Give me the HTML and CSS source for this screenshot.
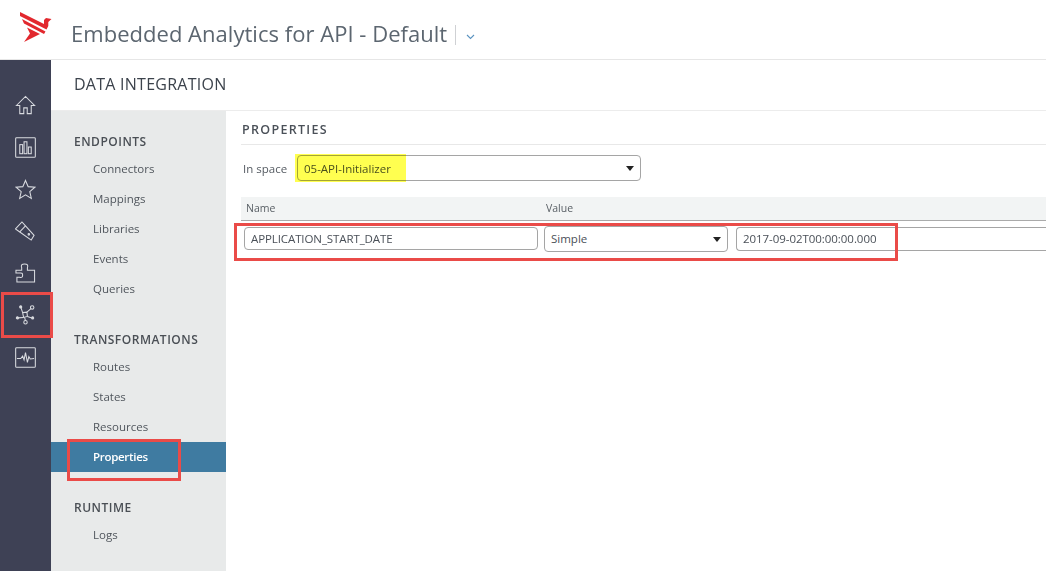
FILE: index.html
```html
<!DOCTYPE html>
<html>
    <head>
        <meta charset="utf-8" />
        <title>Data Integration</title>
        <link rel="stylesheet" href="styles.css">
    </head>
    <body>
        <header class="topbar">
            <svg class="logo" width="32" height="32" viewBox="0 0 32 32">
                <path fill="#e2282e" d="M0 0 L24 12 L24 8 L26 6 L31.500 7 L28.300 10 L28.300 14 L26.500 17.500 L0 4 Z"/>
                <path fill="#e2282e" d="M2 7 L25.500 19.500 L24 22 L4 11.500 Z"/>
                <path fill="#e2282e" d="M7 15.500 L20 22 L4 30 L10 21.500 Z"/>
            </svg>
            <h1 class="app-title">Embedded Analytics for API - Default</h1>
            <span class="title-sep"></span>
            <svg class="title-caret" width="9" height="6" viewBox="0 0 9 6"><path d="M1 1 L4.500 4.500 L8 1" fill="none" stroke="#5b93c0" stroke-width="1.100"/></svg>
        </header>
        <div class="shell">
            <aside class="rail">
                <svg class="rail-icon" viewBox="0 0 22 22"><path d="M1.500 11 L11 1.500 L20.500 11 L17 11 L17 19.500 L12.800 19.500 L12.800 13.500 L9.200 13.500 L9.200 19.500 L5 19.500 L5 11 Z"/></svg>
                <svg class="rail-icon" viewBox="0 0 22 22"><rect x="0.700" y="0.700" width="20.600" height="20.600" rx="1"/><rect x="5" y="8" width="3" height="9.500"/><rect x="9.500" y="5" width="3" height="12.500"/><rect x="14" y="10.500" width="3" height="7"/></svg>
                <svg class="rail-icon" viewBox="0 0 22 22"><path d="M11 1.500 L13.800 8 L20.800 8.600 L15.500 13.300 L17.100 20.300 L11 16.600 L4.900 20.300 L6.500 13.300 L1.200 8.600 L8.200 8 Z"/></svg>
                <svg class="rail-icon" viewBox="0 0 22 22"><path d="M0.500 8.300 L7.300 1 L11 5 L20 15 L17 20 L5 11.500 Z"/><path d="M5 11.500 L11 5"/><circle cx="14.500" cy="14" r="0.800"/></svg>
                <svg class="rail-icon" viewBox="0 0 22 22"><path d="M1 7.500 L7 7.500 L7 5 Q5.500 1 10 1 Q14.500 1 13 5 L13 7.500 L20.500 7.500 L20.500 20 L2 20 L2 15 L5 15 Q8 16 8 12.500 Q8 10 5 10.500 L1 10.500 Z"/></svg>
                <svg class="rail-icon" viewBox="0 0 22 22"><path d="M8 8 L12.500 7.500 L13 12 L9 13 Z"/><path d="M6 2 L8 8 M12.500 7.500 L17 3.500 M9 13 L3 13.500 M13 12 L17.500 13.500 M10 13 L11 16.500"/><circle cx="6" cy="2" r="1.100" class="dot"/><circle cx="18" cy="2.500" r="1.800"/><circle cx="2.500" cy="13.500" r="1.100" class="dot"/><circle cx="18.500" cy="13.500" r="1.100" class="dot"/><circle cx="11" cy="18" r="1.800"/></svg>
                <svg class="rail-icon" viewBox="0 0 22 22"><rect x="0.700" y="0.700" width="20.600" height="20.600" rx="1"/><path d="M2 12 L6 12 L8 9.500 L9.500 13.500 L11 6 L13 16 L14.500 10 L16 12.500 L20 12"/></svg>
            </aside>
            <div class="workspace">
                <div class="section-title">DATA INTEGRATION</div>
                <div class="columns">
                    <nav class="side-nav">
                        <h3 class="nav-group">ENDPOINTS</h3>
                        <a class="nav-item">Connectors</a>
                        <a class="nav-item">Mappings</a>
                        <a class="nav-item">Libraries</a>
                        <a class="nav-item">Events</a>
                        <a class="nav-item">Queries</a>
                        <h3 class="nav-group">TRANSFORMATIONS</h3>
                        <a class="nav-item">Routes</a>
                        <a class="nav-item">States</a>
                        <a class="nav-item">Resources</a>
                        <a class="nav-item active">Properties</a>
                        <h3 class="nav-group">RUNTIME</h3>
                        <a class="nav-item">Logs</a>
                    </nav>
                    <main class="content">
                        <h2 class="content-title">PROPERTIES</h2>
                        <div class="space-row">
                            <span class="space-label">In space</span>
                            <div class="field field-select space-select">
                                <span>05-API-Initializer</span>
                                <i class="arrow"></i>
                                <b class="highlight"></b>
                            </div>
                        </div>
                        <div class="table-head">
                            <span class="col-name">Name</span>
                            <span>Value</span>
                        </div>
                        <div class="table-row">
                            <div class="field name-field">APPLICATION_START_DATE</div>
                            <div class="field field-select type-field"><span>Simple</span><i class="arrow"></i></div>
                            <div class="field value-field">2017-09-02T00:00:00.000</div>
                        </div>
                    </main>
                </div>
            </div>
        </div>
        <div class="mark mark-rail"></div>
        <div class="mark mark-nav"></div>
        <div class="mark mark-row"></div>
    </body>
</html>
```

FILE: styles.css
```css
html, body {
    margin: 0;
    padding: 0;
    height: 571px;
    overflow: hidden;
    background: #fff;
}

body {
    font-family: "Open Sans", sans-serif;
    color: #4a5058;
    position: relative;
}

.topbar {
    height: 59px;
    border-bottom: 1px solid #e6e6e6;
    display: flex;
    align-items: center;
}

.logo {
    margin-left: 20px;
    margin-top: -3px;
    flex: none;
}

.app-title {
    margin: 6px 0 0 19px;
    font-size: 22px;
    font-weight: 400;
    letter-spacing: 0.03px;
    color: #5c6670;
    white-space: nowrap;
}

.title-sep {
    width: 1px;
    height: 20px;
    background: #cfd1d4;
    margin: 11px 0 0 8px;
}

.title-caret {
    margin: 15px 0 0 10px;
}

.shell {
    display: flex;
    height: 511px;
}

.rail {
    width: 51px;
    flex: none;
    background: #3e4155;
    padding-top: 35px;
    box-sizing: border-box;
    display: flex;
    flex-direction: column;
    align-items: center;
    gap: 21px;
}

.rail-icon {
    width: 21px;
    height: 21px;
    fill: none;
    stroke: #d9dbe0;
    stroke-width: 1.100;
    flex: none;
}

.rail-icon .dot {
    fill: #d9dbe0;
}

.workspace {
    flex: 1;
    min-width: 0;
    display: flex;
    flex-direction: column;
}

.section-title {
    height: 51px;
    line-height: 48px;
    padding-left: 23px;
    font-size: 16px;
    letter-spacing: 0.25px;
    color: #3c434c;
    border-bottom: 1px solid #ececec;
    box-sizing: border-box;
    flex: none;
}

.columns {
    flex: 1;
    display: flex;
    min-height: 0;
}

.side-nav {
    width: 175px;
    flex: none;
    background: #e8eaea;
    padding-top: 22px;
    box-sizing: border-box;
}

.nav-group {
    margin: 0 0 3px 23px;
    height: 18px;
    line-height: 18px;
    font-size: 12px;
    font-weight: 600;
    letter-spacing: 0.5px;
    color: #4a4f55;
}

.nav-item {
    display: block;
    height: 30px;
    line-height: 30px;
    padding-left: 42px;
    font-size: 11.500px;
    color: #50565d;
}

.nav-item + .nav-group {
    margin-top: 27px;
}

.nav-item.active {
    background: #3f7ba1;
    color: #fff;
    font-weight: 600;
    letter-spacing: -0.3px;
}

.content {
    flex: 1;
    min-width: 0;
    padding: 10px 0 0 15px;
}

.content-title {
    margin: 0;
    height: 23px;
    line-height: 17px;
    font-size: 12.500px;
    font-weight: 600;
    letter-spacing: 1.300px;
    color: #4a5058;
    padding-left: 1px;
    border-bottom: 1px solid #e8e8e8;
}

.space-row {
    display: flex;
    align-items: center;
    margin-top: 10px;
    height: 26px;
}

.space-label {
    width: 54px;
    padding-left: 2px;
    font-size: 11.500px;
    color: #555b62;
    flex: none;
}

.field {
    height: 24px;
    line-height: 23px;
    border: 1px solid #a5a5a5;
    border-radius: 4px;
    font-size: 11.500px;
    color: #4a5058;
    padding: 0 6px;
    background: #fff;
    white-space: nowrap;
    flex: none;
}

.field-select {
    position: relative;
    display: flex;
    align-items: center;
    justify-content: space-between;
}

.arrow {
    width: 0;
    height: 0;
    border-left: 4px solid transparent;
    border-right: 4px solid transparent;
    border-top: 5px solid #222;
}

.space-select {
    width: 330px;
}

.highlight {
    position: absolute;
    left: -3px;
    top: -2px;
    width: 111px;
    height: 28px;
    background: #ffff50;
    mix-blend-mode: multiply;
}

.table-head {
    display: flex;
    align-items: center;
    height: 24px;
    margin-top: 16px;
    padding: 0 0 2px 5px;
    box-sizing: border-box;
    background: #f2f4f4;
    border-bottom: 1px solid #aaa;
    font-size: 10.500px;
    color: #5a6066;
}

.col-name {
    width: 300px;
}

.table-row {
    display: flex;
    padding: 5px 0 0 3px;
    gap: 6px;
}

.name-field {
    width: 280px;
    height: 21px;
    line-height: 22px;
    margin-top: 1px;
    letter-spacing: -0.1px;
}

.type-field {
    width: 170px;
}

.type-field span {
    margin-top: -2px;
}

.value-field {
    flex: 1;
    margin: 1px 0 0 2px;
    border-right: none;
    border-radius: 4px 0 0 4px;
    height: 22px;
    line-height: 21px;
    letter-spacing: -0.05px;
}

.mark {
    position: absolute;
    border: 3px solid #ea4b48;
    box-sizing: border-box;
}

.mark-rail {
    left: 1px;
    top: 292px;
    width: 52px;
    height: 46px;
}

.mark-nav {
    left: 67px;
    top: 439px;
    width: 114px;
    height: 42px;
}

.mark-row {
    left: 234px;
    top: 223px;
    width: 664px;
    height: 38px;
}
```
